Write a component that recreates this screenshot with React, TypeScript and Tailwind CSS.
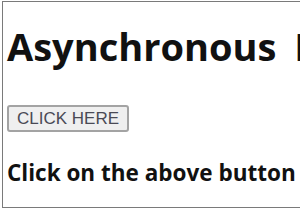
export default function App() {
  return (
    <div className="w-[300px] h-[210px] overflow-hidden bg-white">
      <div className="ml-[2px] mt-[1px] w-[340px] h-[207px] border border-[#7a7a7a] bg-white pl-[4px] flex flex-col">
        <h1
          className="mt-[21px] text-[38px] leading-[46px] font-bold text-[#111] whitespace-nowrap [word-spacing:8px]"
          style={{ fontFamily: '"Open Sans", "Noto Sans", sans-serif' }}
        >
          Asynchronous In JavaScript
        </h1>
        <div className="mt-[36px]">
          <button
            className="h-[27px] w-[122px] bg-[#efefef] border-2 border-[#a3a3a3] rounded-[3px] text-[17px] leading-none text-[#4a4a55]"
            style={{ fontFamily: '"Liberation Sans", Arial, sans-serif' }}
          >
            CLICK HERE
          </button>
        </div>
        <p
          className="mt-[26px] text-[22.5px] leading-[30px] font-bold text-[#111] whitespace-nowrap"
          style={{ fontFamily: '"Open Sans", "Noto Sans", sans-serif' }}
        >
          Click on the above button
        </p>
      </div>
    </div>
  );
}
